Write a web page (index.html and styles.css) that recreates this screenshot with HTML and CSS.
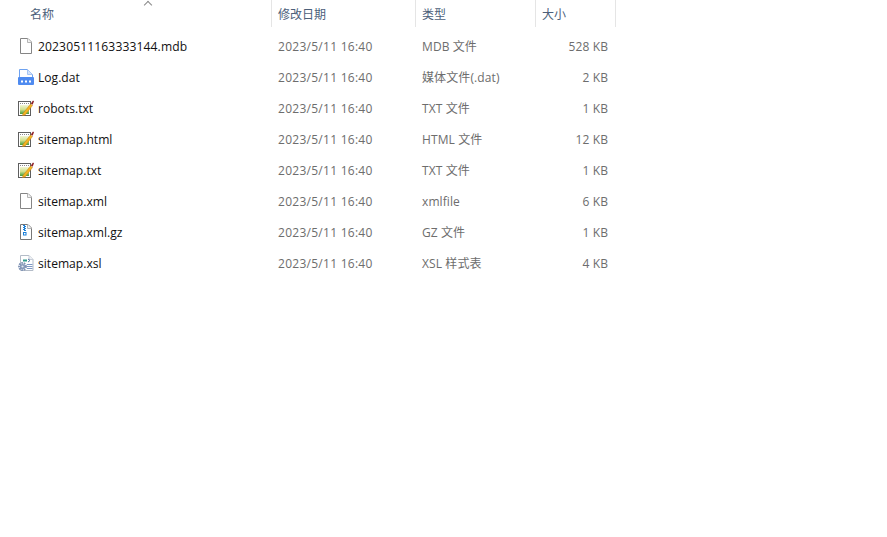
FILE: index.html
```html
<!DOCTYPE html>
<html lang="zh-CN">
<head>
<meta charset="utf-8">
<title>文件列表</title>
<link rel="stylesheet" href="styles.css">
</head>
<body>
<svg class="defs" width="0" height="0" aria-hidden="true">
  <defs>
    <linearGradient id="g-note" x1="0" y1="0" x2="0" y2="1">
      <stop offset="0" stop-color="#f2f5d2"/>
      <stop offset=".5" stop-color="#cfe08e"/>
      <stop offset="1" stop-color="#3f9a3a"/>
    </linearGradient>
  </defs>
  <symbol id="i-blank" viewBox="0 0 16 16">
    <path d="M2.5 .5H10L13.5 4V15.5H2.5Z" fill="#fff" stroke="#858585"/>
    <path d="M9.5 .5V4.5H13.5" fill="#f2f2f2" stroke="#b5b5b5"/>
  </symbol>
  <symbol id="i-dat" viewBox="0 0 16 16">
    <path d="M1.5 8V.5H9.5L14.5 5.5V8" fill="#fff" stroke="#6ea2f0"/>
    <path d="M9.5 .5V5.5H14.5Z" fill="#d5e4fa" stroke="#a5c5f5"/>
    <rect x="0" y="8" width="16" height="8" rx="1" fill="#4f8bf0"/>
    <path d="M3 12.5h2M7 12.5h2M11 12.5h2" stroke="#fff" stroke-width="2"/>
  </symbol>
  <symbol id="i-txt" viewBox="0 0 16 16">
    <rect x=".5" y="1.5" width="12" height="14" fill="#fff" stroke="#5e5e5e"/>
    <path d="M2 3.5h9" stroke="#8a8a8a" stroke-dasharray="1 1"/>
    <rect x="2" y="5" width="9" height="9" fill="url(#g-note)"/>
    <path d="M5 13.5L12.5 4L14.5 5.5L7 15L4.5 15.5Z" fill="#f3b422" stroke="#c97f10" stroke-width=".5"/>
    <path d="M12.8 3.5L15 .5L16 1.2L14.6 4.8Z" fill="#8e1f24"/>
  </symbol>
  <symbol id="i-gz" viewBox="0 0 16 16">
    <path d="M2.5 .5H10L13.5 4V15.5H2.5Z" fill="#fff" stroke="#777"/>
    <path d="M9.5 .5V4.5H13.5" fill="#f2f2f2" stroke="#b5b5b5"/>
    <path d="M5 1.5h2M6 2.5h2M5 3.5h2M6 4.5h2M5 5.5h2M6 6.5h2" stroke="#1a7fd8"/>
    <rect x="5.5" y="8.5" width="2.5" height="2.5" fill="#fff" stroke="#1a7fd8"/>
  </symbol>
  <symbol id="i-xsl" viewBox="0 0 16 16">
    <path d="M2.5 .5H11L15 4.5V15.5H2.5Z" fill="#fff" stroke="#b4bcc8"/>
    <path d="M11 .5V4.5H15" fill="#eef1f5" stroke="#c8ced8"/>
    <path d="M5 5.5h4" stroke="#2f9a8a" stroke-width="2"/>
    <path d="M10 4l2 1.5-2 1.5" fill="none" stroke="#5577aa"/>
    <path d="M9 9.5h5.5M9 11.5h5.5M9 13.5h5.5" stroke="#7f98c4"/>
    <circle cx="4.5" cy="11.5" r="3.4" fill="none" stroke="#7f93b5" stroke-width="2" stroke-dasharray="1.6 .8"/>
    <circle cx="4.5" cy="11.5" r="2.6" fill="#8698b8"/>
    <circle cx="4.5" cy="11.5" r="1.1" fill="#e4e9f2"/>
  </symbol>
</svg>

<div class="list">
  <div class="head">
    <div class="col name-col">名称<span class="sort"></span></div>
    <div class="col">修改日期</div>
    <div class="col">类型</div>
    <div class="col">大小</div>
  </div>

  <div class="row">
    <div class="file"><svg class="icon"><use href="#i-blank"/></svg><span class="digits">20230511163333144.mdb</span></div>
    <div class="cell date">2023/5/11 16:40</div><div class="cell">MDB 文件</div><div class="cell size">528 KB</div>
  </div>
  <div class="row">
    <div class="file"><svg class="icon"><use href="#i-dat"/></svg><span>Log.dat</span></div>
    <div class="cell date">2023/5/11 16:40</div><div class="cell">媒体文件(.dat)</div><div class="cell size">2 KB</div>
  </div>
  <div class="row">
    <div class="file"><svg class="icon"><use href="#i-txt"/></svg><span>robots.txt</span></div>
    <div class="cell date">2023/5/11 16:40</div><div class="cell">TXT 文件</div><div class="cell size">1 KB</div>
  </div>
  <div class="row">
    <div class="file"><svg class="icon"><use href="#i-txt"/></svg><span>sitemap.html</span></div>
    <div class="cell date">2023/5/11 16:40</div><div class="cell">HTML 文件</div><div class="cell size">12 KB</div>
  </div>
  <div class="row">
    <div class="file"><svg class="icon"><use href="#i-txt"/></svg><span>sitemap.txt</span></div>
    <div class="cell date">2023/5/11 16:40</div><div class="cell">TXT 文件</div><div class="cell size">1 KB</div>
  </div>
  <div class="row">
    <div class="file"><svg class="icon"><use href="#i-blank"/></svg><span>sitemap.xml</span></div>
    <div class="cell date">2023/5/11 16:40</div><div class="cell">xmlfile</div><div class="cell size">6 KB</div>
  </div>
  <div class="row">
    <div class="file"><svg class="icon"><use href="#i-gz"/></svg><span>sitemap.xml.gz</span></div>
    <div class="cell date">2023/5/11 16:40</div><div class="cell">GZ 文件</div><div class="cell size">1 KB</div>
  </div>
  <div class="row">
    <div class="file"><svg class="icon"><use href="#i-xsl"/></svg><span>sitemap.xsl</span></div>
    <div class="cell date">2023/5/11 16:40</div><div class="cell">XSL 样式表</div><div class="cell size">4 KB</div>
  </div>
</div>
</body>
</html>
```

FILE: styles.css
```css
html, body {
  margin: 0;
  padding: 0;
  height: 100%;
  background: #fff;
  overflow: hidden;
}

body {
  font-family: "Open Sans", "Noto Sans CJK SC", sans-serif;
  font-size: 12px;
  line-height: 16px;
  color: #6d6d6d;
}

.defs {
  display: block;
  height: 0;
}

.list {
  width: 616px;
}

.head,
.row {
  display: grid;
  grid-template-columns: 272px 144px 120px 80px;
}

.head {
  height: 27px;
  margin-bottom: 4px;
  color: #4c607a;
}

.col {
  position: relative;
  display: flex;
  align-items: center;
  padding-left: 6px;
  padding-top: 2px;
  border-right: 1px solid #e5e5e5;
}

.name-col {
  padding-left: 30px;
}

.sort {
  position: absolute;
  top: 2px;
  left: 145px;
  width: 5px;
  height: 5px;
  border-top: 1px solid #8a8a8a;
  border-left: 1px solid #8a8a8a;
  transform: rotate(45deg);
}

.row {
  height: 31px;
  align-items: center;
}

.file {
  display: flex;
  align-items: center;
  gap: 4px;
  padding-left: 18px;
  color: #111;
  font-size: 12.1px;
}

.digits {
  letter-spacing: 0.12px;
}

.icon {
  flex: none;
  width: 16px;
  height: 16px;
  margin-bottom: 1px;
}

.cell {
  padding-left: 6px;
  letter-spacing: 0.1px;
}

.date {
  letter-spacing: 0.27px;
}

.size {
  padding-right: 8px;
  text-align: right;
}
```
